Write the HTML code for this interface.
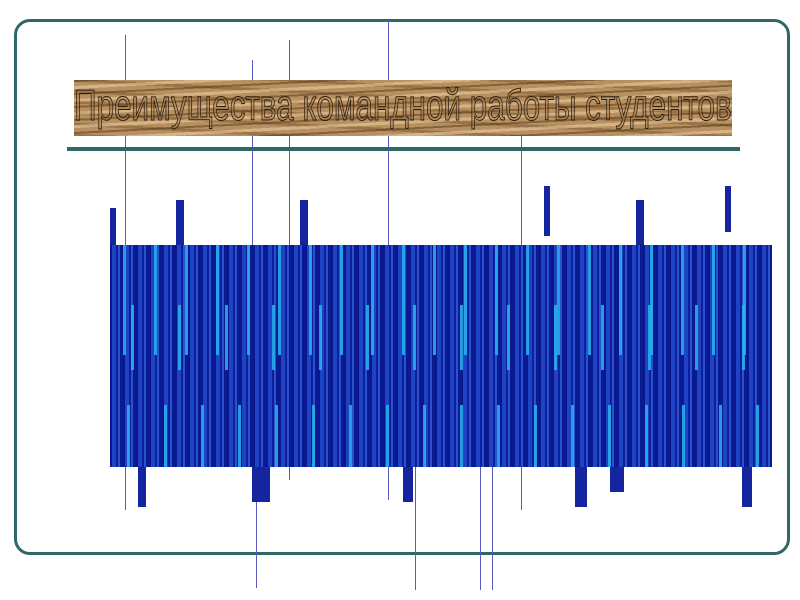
<!DOCTYPE html>
<html><head><meta charset="utf-8"><style>
html,body{margin:0;padding:0;background:#fff;width:800px;height:600px;overflow:hidden;position:relative}
.a{position:absolute}
.frame{left:14px;top:19px;width:770px;height:530px;border:3px solid #2f6866;border-radius:16px}
.wood{left:74px;top:80px;width:658px;height:56px;background:
 repeating-linear-gradient(177deg,rgba(70,45,20,.45) 0 2px,transparent 2px 6px,rgba(240,215,170,.5) 6px 9px,transparent 9px 13px),
 repeating-linear-gradient(183deg,rgba(110,75,40,.4) 0 3px,transparent 3px 11px),#b88f5e}
.title{left:74px;top:76px;font:44px "Liberation Sans",sans-serif;color:rgba(160,120,80,.4);-webkit-text-stroke:1px #2a1d10;transform:scaleX(0.714);transform-origin:left;white-space:nowrap;line-height:60px}
.rule{left:67px;top:147px;width:673px;height:4px;background:#2f6866}
.blk{left:110px;top:245px;width:662px;height:222px;background:
 repeating-linear-gradient(90deg,#0a1790 0 2px,#1e44c4 2px 6px,#0d1f9a 6px 8px,#2a52d0 8px 10px,#0a1a8f 10px 13px);}
.b2{left:110px;top:245px;width:662px;height:110px;background:repeating-linear-gradient(90deg,transparent 0 13px,rgba(40,180,240,.85) 13px 16px,transparent 16px 31px)}
.b3{left:110px;top:305px;width:662px;height:65px;background:repeating-linear-gradient(90deg,transparent 0 21px,rgba(40,180,240,.85) 21px 24px,transparent 24px 47px)}
.b4{left:110px;top:405px;width:662px;height:62px;background:repeating-linear-gradient(90deg,transparent 0 17px,rgba(40,180,240,.85) 17px 20px,transparent 20px 37px)}
.v{width:1px;background:#5a5ac0}
.t{background:#1525a0}
</style></head><body>
<div class="a frame"></div>
<div class="a v" style="left:125px;top:35px;height:475px"></div>
<div class="a v" style="left:252px;top:60px;height:440px"></div>
<div class="a v" style="left:289px;top:40px;height:440px"></div>
<div class="a v" style="left:388px;top:20px;height:480px"></div>
<div class="a v" style="left:521px;top:130px;height:380px"></div>
<div class="a v" style="left:256px;top:470px;height:118px"></div>
<div class="a v" style="left:415px;top:440px;height:150px"></div>
<div class="a v" style="left:480px;top:450px;height:140px"></div>
<div class="a v" style="left:492px;top:450px;height:140px"></div>
<div class="a wood"></div>
<div class="a title">Преимущества командной работы студентов</div>
<div class="a rule"></div>
<div class="a t" style="left:110px;top:208px;width:6px;height:40px"></div>
<div class="a t" style="left:176px;top:200px;width:8px;height:48px"></div>
<div class="a t" style="left:300px;top:200px;width:8px;height:48px"></div>
<div class="a t" style="left:544px;top:186px;width:6px;height:50px"></div>
<div class="a t" style="left:636px;top:200px;width:8px;height:48px"></div>
<div class="a t" style="left:725px;top:186px;width:6px;height:46px"></div>
<div class="a blk"></div>
<div class="a b2"></div>
<div class="a b3"></div>
<div class="a b4"></div>
<div class="a t" style="left:138px;top:467px;width:8px;height:40px"></div>
<div class="a t" style="left:252px;top:467px;width:18px;height:35px"></div>
<div class="a t" style="left:403px;top:467px;width:10px;height:35px"></div>
<div class="a t" style="left:575px;top:467px;width:12px;height:40px"></div>
<div class="a t" style="left:610px;top:467px;width:14px;height:25px"></div>
<div class="a t" style="left:742px;top:467px;width:10px;height:40px"></div>
</body></html>
